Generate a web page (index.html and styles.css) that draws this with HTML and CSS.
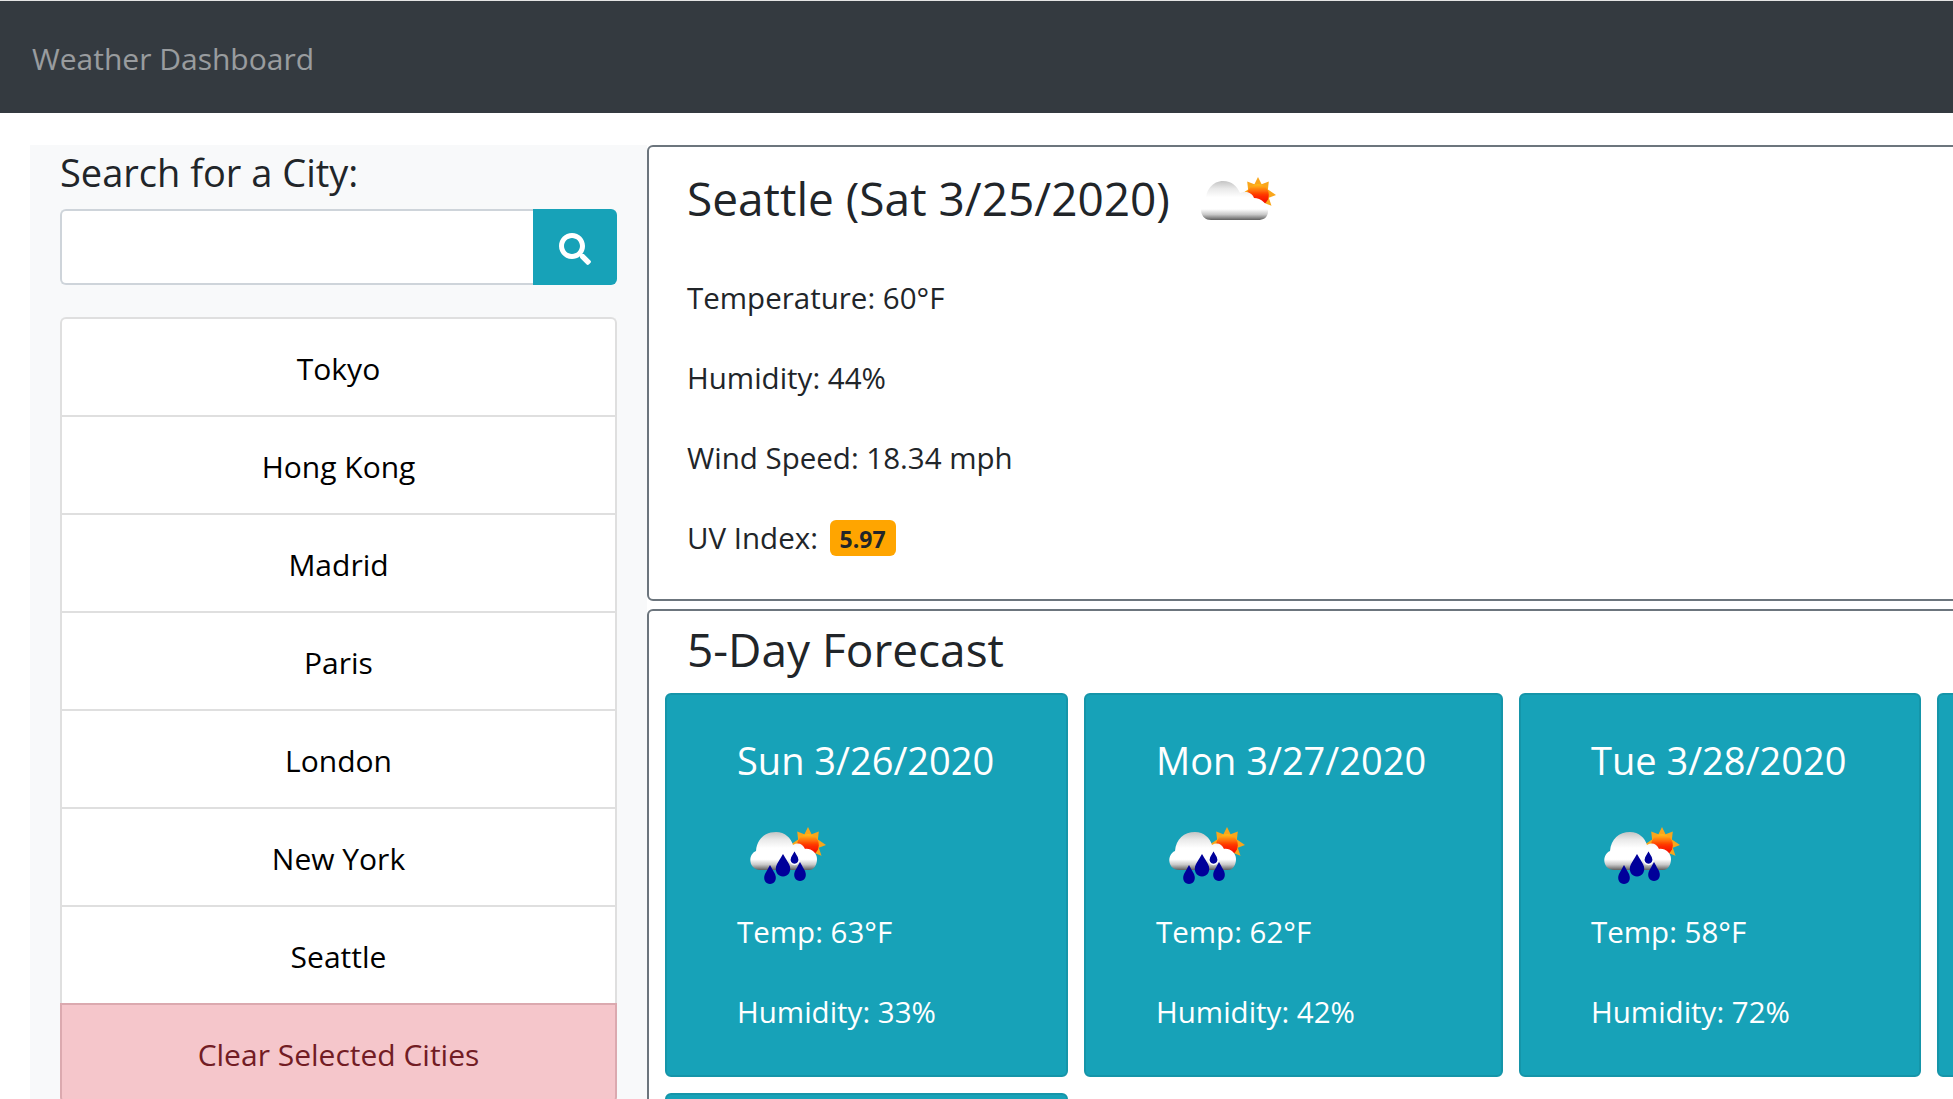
FILE: index.html
```html
<!DOCTYPE html>
<html>
<head>
    <title>Weather Dashboard</title>
    <meta charset="UTF-8">
    <link rel="stylesheet" href="styles.css">
</head>
<body>
    <svg class="defs" width="0" height="0">
        <defs>
            <linearGradient id="cloudFill" x1="0" y1="0" x2="0" y2="1">
                <stop offset="0" stop-color="#c4c4c4"/>
                <stop offset="0.2" stop-color="#eaeaea"/>
                <stop offset="0.42" stop-color="#ffffff"/>
                <stop offset="0.72" stop-color="#ffffff"/>
                <stop offset="0.86" stop-color="#c8c8c8"/>
                <stop offset="1" stop-color="#5f5f5f"/>
            </linearGradient>
            <linearGradient id="sunFill" x1="0" y1="0" x2="0" y2="1">
                <stop offset="0" stop-color="#ffc21a"/>
                <stop offset="0.5" stop-color="#ff3300"/>
                <stop offset="1" stop-color="#f00000"/>
            </linearGradient>
            <filter id="soft"><feGaussianBlur stdDeviation="0.7"/></filter>

            <symbol id="sun" viewBox="0 0 40 40">
                <path d="M20 0l4 8 8-3-1 9 9 6-8 3 3 9-8-3-7 9-7-9-8 3 3-9-8-3 9-6-1-9 8 3z" fill="#f9a61a"/>
                <circle cx="20" cy="20" r="12" fill="url(#sunFill)"/>
            </symbol>

            <!-- few clouds, day -->
            <symbol id="icon-cloud" viewBox="0 0 110 70">
                <g filter="url(#soft)">
                    <use href="#sun" x="61" y="12" width="36" height="36"/>
                    <path d="M32 55c-11 0-13-14-5-18-1-12 7-21 17-21 9 0 14 5 17 12 5-2 12-1 14 5 7 0 14 6 14 13s-5 9-10 9z" fill="url(#cloudFill)"/>
                </g>
            </symbol>

            <!-- rain, day -->
            <symbol id="icon-rain" viewBox="0 0 110 80">
                <g filter="url(#soft)">
                    <use href="#sun" x="53" y="12" width="36" height="36"/>
                    <path d="M23 55c-11 0-13-15-4-19 1-12 9-19 20-19 9 0 15 6 17 13 5-3 10-1 12 4 6-1 12 4 12 10s-3 11-8 11z" fill="url(#cloudFill)"/>
                    <path d="M46 39l6 10c3.500 7-1 12.500-6 12.500s-9.500-5.500-6-12.500z" fill="#00009a"/>
                    <path d="M57.500 35l4 7c2 4.500-1 7.500-4 7.500s-6-3-4-7.500z" fill="#00009a" stroke="#fff" stroke-width="1.500"/>
                    <path d="M33 50l5 9c2.500 6-1 10-5 10s-7.500-4-5-10z" fill="#00009a"/>
                    <path d="M63 47l5 9c2.500 6-1 10-5 10s-7.500-4-5-10z" fill="#00009a"/>
                </g>
            </symbol>
        </defs>
    </svg>

    <nav class="navbar">
        <span class="brand">Weather Dashboard</span>
    </nav>

    <div class="layout">
        <!-- Search and saved cities -->
        <aside class="sidebar">
            <h4 class="search-title">Search for a City:</h4>
            <form class="search-form">
                <input class="search-input" type="text">
                <button class="search-btn" type="button" aria-label="Search">
                    <svg width="32" height="32" viewBox="0 0 512 512"><path fill="#fff" d="M505 442.700L405.300 343c-4.500-4.500-10.600-7-17-7H372c27.600-35.300 44-79.700 44-128C416 93.100 322.900 0 208 0S0 93.100 0 208s93.100 208 208 208c48.300 0 92.700-16.400 128-44v16.300c0 6.400 2.500 12.500 7 17l99.700 99.700c9.400 9.400 24.600 9.400 33.900 0l28.300-28.300c9.400-9.400 9.400-24.600.1-34zM208 336c-70.700 0-128-57.200-128-128 0-70.700 57.200-128 128-128 70.700 0 128 57.200 128 128 0 70.700-57.200 128-128 128z"/></svg>
                </button>
            </form>
            <ul class="city-list">
                <li class="city">Tokyo</li>
                <li class="city">Hong Kong</li>
                <li class="city">Madrid</li>
                <li class="city">Paris</li>
                <li class="city">London</li>
                <li class="city">New York</li>
                <li class="city">Seattle</li>
                <li class="city city-clear">Clear Selected Cities</li>
            </ul>
        </aside>

        <main class="main">
            <!-- Current weather -->
            <section class="panel current">
                <div class="current-head">
                    <h2 class="current-title">Seattle (Sat 3/25/2020)</h2>
                    <svg class="current-icon"><use href="#icon-cloud"/></svg>
                </div>
                <p class="stat">Temperature: 60°F</p>
                <p class="stat">Humidity: 44%</p>
                <p class="stat">Wind Speed: 18.34 mph</p>
                <p class="stat">UV Index: <span class="uv">5.97</span></p>
            </section>

            <!-- Forecast -->
            <section class="panel forecast">
                <h2 class="forecast-title">5-Day Forecast</h2>
                <div class="forecast-grid">
                    <div class="day">
                        <h4 class="day-title">Sun 3/26/2020</h4>
                        <svg class="day-icon"><use href="#icon-rain"/></svg>
                        <p class="day-stat">Temp: 63°F</p>
                        <p class="day-stat">Humidity: 33%</p>
                    </div>
                    <div class="day">
                        <h4 class="day-title">Mon 3/27/2020</h4>
                        <svg class="day-icon"><use href="#icon-rain"/></svg>
                        <p class="day-stat">Temp: 62°F</p>
                        <p class="day-stat">Humidity: 42%</p>
                    </div>
                    <div class="day">
                        <h4 class="day-title">Tue 3/28/2020</h4>
                        <svg class="day-icon"><use href="#icon-rain"/></svg>
                        <p class="day-stat">Temp: 58°F</p>
                        <p class="day-stat">Humidity: 72%</p>
                    </div>
                    <div class="day"></div>
                    <div class="day"></div>
                </div>
            </section>
        </main>
    </div>
</body>
</html>
```

FILE: styles.css
```css
* {
    box-sizing: border-box;
}
html, body {
    height: 1099px;
    overflow: hidden;
}
body {
    margin: 0;
    background-color: #fff;
    color: #212529;
    font-family: "Open Sans", "Noto Sans", sans-serif;
}
.defs {
    display: block;
    height: 0;
}
.navbar {
    height: 113px;
    padding: 36px 32px 0;
    background-color: #343a40;
    border-top: 1px solid #e4e4e4;
}
.brand {
    color: rgba(255, 255, 255, .5);
    font-size: 30px;
    line-height: 44px;
}
.layout {
    display: flex;
    padding: 32px 0 0 30px;
}
.sidebar {
    flex: none;
    width: 617px;
    height: 960px;
    padding: 0 30px;
    background-color: #f8f9fa;
}
.search-title {
    margin: 0;
    height: 64px;
    font-size: 38px;
    font-weight: 400;
    line-height: 54px;
}
.search-form {
    display: flex;
    height: 76px;
}
.search-input {
    flex: 1;
    min-width: 0;
    border: 2px solid #ced4da;
    border-right: none;
    border-radius: 6px 0 0 6px;
    background-color: #fff;
}
.search-btn {
    display: flex;
    align-items: center;
    justify-content: center;
    width: 84px;
    padding: 3px 0 0;
    border: none;
    border-radius: 0 6px 6px 0;
    background-color: #17a2b8;
}
.city-list {
    margin: 32px 0 0;
    padding: 0;
    list-style: none;
}
.city {
    height: 98px;
    padding-top: 26px;
    background-color: #fff;
    border: 2px solid #dfdfdf;
    border-bottom: none;
    color: #000;
    font-size: 30px;
    line-height: 48px;
    text-align: center;
}
.city:first-child {
    border-radius: 6px 6px 0 0;
}
.city-clear {
    height: 100px;
    background-color: #f5c6cb;
    border-color: #dba9af;
    border-bottom: 2px solid #dba9af;
    border-radius: 0 0 6px 6px;
    color: #721c24;
}
.main {
    flex: none;
    width: 1400px;
}
.panel {
    background-color: #fff;
    border: 2px solid #6c757d;
    border-radius: 6px;
}
.current {
    height: 456px;
    padding: 0 38px;
}
.current-head {
    display: flex;
    align-items: flex-start;
    height: 129px;
}
.current-title {
    margin: 0;
    padding-top: 21px;
    font-size: 46px;
    font-weight: 400;
    line-height: 60px;
}
.current-icon {
    width: 110px;
    height: 70px;
    margin: 18px 0 0 9px;
}
.stat {
    height: 80px;
    margin: 0;
    font-size: 29.500px;
    line-height: 44px;
}
.uv {
    display: inline-block;
    height: 36px;
    margin-left: 4px;
    padding: 0 10px;
    background-color: #ffa500;
    border-radius: 6px;
    font-size: 23px;
    font-weight: 700;
    line-height: 38px;
    vertical-align: 1px;
}
.forecast {
    height: 520px;
    margin-top: 8px;
    padding: 0 16px;
}
.forecast-title {
    height: 82px;
    margin: 0 0 0 22px;
    font-size: 46px;
    font-weight: 400;
    line-height: 76px;
}
.forecast-grid {
    display: grid;
    grid-template-columns: 403px 419px 402px 403px;
    grid-auto-rows: 384px;
    gap: 16px;
}
.day {
    padding: 40px 0 0 70px;
    background-color: #17a2b8;
    border: 2px solid #1595a9;
    border-radius: 6px;
    color: #fff;
}
.day-title {
    height: 74px;
    margin: 0;
    font-size: 38px;
    font-weight: 400;
    line-height: 50px;
}
.day-icon {
    display: block;
    width: 110px;
    height: 80px;
    margin: 6px 0 15px;
}
.day-stat {
    height: 80px;
    margin: 0;
    font-size: 29.500px;
    line-height: 44px;
}
```
